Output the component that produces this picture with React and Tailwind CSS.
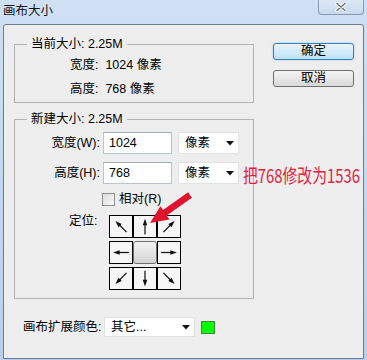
import React from "react";

const FONT = { fontFamily: '"Liberation Sans", "Noto Sans CJK SC", sans-serif' };

function Arrow({ angle }) {
  return (
    <svg width="22" height="21" viewBox="0 0 24 24">
      <g transform={`rotate(${angle} 12 12)`}>
        <line x1="12" y1="21" x2="12" y2="8" stroke="#111" strokeWidth="1.4" />
        <polygon points="12,3 9.4,10.5 14.6,10.5" fill="#111" />
      </g>
    </svg>
  );
}

function Cell({ angle }) {
  return (
    <div className="w-[24px] h-[23px] border border-black bg-[#f6f6f6] flex items-center justify-center">
      <Arrow angle={angle} />
    </div>
  );
}

function DropArrow() {
  return (
    <svg width="8" height="5" viewBox="0 0 8 5">
      <polygon points="0,0 8,0 4,4.5" fill="#111" />
    </svg>
  );
}

export default function App() {
  return (
    <div
      className="w-[367px] h-[360px] bg-gradient-to-b from-[#cfe0f4] to-[#b9cfe9] flex flex-col relative overflow-hidden text-[12.5px] text-black"
      style={FONT}
    >
      {/* title bar */}
      <div className="h-[24px] flex items-start justify-between">
        <div className="pl-[3px] pt-[3px] leading-[16px] text-[12.5px] text-[#111]">画布大小</div>
        <div className="mr-[3px] w-[46px] h-[15px] rounded-b-[4px] border border-t-0 border-[#8a9bb1] bg-gradient-to-b from-[#dce8f6] to-[#c9daef] flex items-center justify-center">
          <svg width="12" height="10" viewBox="0 0 12 10">
            <path d="M2 1.5 L10 8.5 M10 1.5 L2 8.5" stroke="#ffffff" strokeWidth="3.4" strokeLinecap="round" />
            <path d="M2 1.5 L10 8.5 M10 1.5 L2 8.5" stroke="#6a6f78" strokeWidth="1.5" strokeLinecap="round" />
          </svg>
        </div>
      </div>

      {/* content */}
      <div className="mx-[3px] h-[335px] bg-[#eeeeee] border border-[#6b7c91] rounded-t-[3px] pl-[10px] pt-[11px] flex flex-col">
        <div className="flex">
          <div className="w-[240px] flex flex-col">
            {/* group 1 */}
            <fieldset className="border border-[#b4b4b4] pb-[5px]">
              <legend className="ml-[12px] px-[4px] leading-[16px]">当前大小: 2.25M</legend>
              <div className="pl-[55px] mt-[5px] leading-[16px]">宽度:&nbsp; 1024 像素</div>
              <div className="pl-[55px] mt-[8px] leading-[16px]">高度:&nbsp; 768 像素</div>
            </fieldset>

            {/* group 2 */}
            <fieldset className="mt-[8px] border border-[#b4b4b4] pb-[8px]">
              <legend className="ml-[12px] px-[4px] leading-[16px]">新建大小: 2.25M</legend>
              <div className="mt-[5px] flex items-center h-[22px]">
                <div className="w-[85px] text-right leading-[16px]">宽度(W):</div>
                <div className="ml-[3px] w-[69px] h-[22px] bg-white border border-[#b7c4d2] border-t-[#9fadbd] flex items-center pl-[5px]">1024</div>
                <div className="ml-[6px] w-[61px] h-[22px] bg-white border border-[#e2e2e2] flex items-center justify-between pl-[6px] pr-[4px]">
                  <span>像素</span>
                  <DropArrow />
                </div>
              </div>
              <div className="mt-[8px] flex items-center h-[22px]">
                <div className="w-[85px] text-right leading-[16px]">高度(H):</div>
                <div className="ml-[3px] w-[69px] h-[22px] bg-white border border-[#b7c4d2] border-t-[#9fadbd] flex items-center pl-[5px]">768</div>
                <div className="ml-[6px] w-[61px] h-[22px] bg-white border border-[#e2e2e2] flex items-center justify-between pl-[6px] pr-[4px]">
                  <span>像素</span>
                  <DropArrow />
                </div>
              </div>
              <div className="mt-[7px] h-[16px] flex items-center pl-[87px]">
                <div className="w-[13px] h-[13px] border border-[#8e8f8f] bg-gradient-to-br from-[#dcdcdc] to-[#fafafa]" />
                <span className="ml-[4px] leading-[16px]">相对(R)</span>
              </div>
              <div className="mt-[6px] flex items-start pl-[54px]">
                <div className="w-[40px] leading-[16px]">定位:</div>
                <div className="mt-[2px] flex flex-col gap-[3px]">
                  <div className="flex">
                    <Cell angle={-45} />
                    <Cell angle={0} />
                    <Cell angle={45} />
                  </div>
                  <div className="flex">
                    <Cell angle={-90} />
                    <div className="w-[24px] h-[23px] rounded-[3px] border border-[#6f6f6f] bg-gradient-to-b from-[#f3f3f3] to-[#d4d4d4]" />
                    <Cell angle={90} />
                  </div>
                  <div className="flex">
                    <Cell angle={-135} />
                    <Cell angle={180} />
                    <Cell angle={135} />
                  </div>
                </div>
              </div>
            </fieldset>
          </div>

          {/* buttons */}
          <div className="ml-[19px] mt-[7px] flex flex-col gap-[10px]">
            <div className="w-[81px] h-[17px] rounded-[3px] border border-[#3c7fb1] bg-gradient-to-b from-[#e8f5fd] to-[#bfe2f6] shadow-[0_0_2px_#7fc4ef] flex items-center justify-center leading-[15px]">确定</div>
            <div className="w-[81px] h-[17px] rounded-[3px] border border-[#707070] bg-gradient-to-b from-[#f4f4f4] to-[#d8d8d8] flex items-center justify-center leading-[15px]">取消</div>
          </div>
        </div>

        {/* bottom row */}
        <div className="mt-[18px] ml-[9px] flex items-center h-[20px]">
          <div className="w-[81px] leading-[16px]">画布扩展颜色:</div>
          <div className="w-[91px] h-[20px] bg-white border border-[#e2e2e2] flex items-center justify-between pl-[6px] pr-[4px]">
            <span>其它...</span>
            <DropArrow />
          </div>
          <div className="ml-[6px] w-[14px] h-[13px] bg-[#00ff00] border border-[#3a8a3a]" />
        </div>
      </div>

      {/* annotation text */}
      <div
        className="absolute left-[243px] top-[165px] text-[19px] leading-[20px] text-[#e8203c] origin-left scale-x-[0.78] whitespace-nowrap"
        style={{ fontFamily: '"Noto Sans CJK SC", sans-serif' }}
      >
        把768修改为1536
      </div>

      {/* annotation arrow */}
      <svg className="absolute left-[140px] top-[190px]" width="55" height="40" viewBox="0 0 55 40">
        <polygon
          points="10,33 29.39,29.44 26.73,25.56 51.86,7.73 48.14,2.27 23.01,20.1 20.35,16.22"
          fill="#e0132f"
        />
      </svg>
    </div>
  );
}
